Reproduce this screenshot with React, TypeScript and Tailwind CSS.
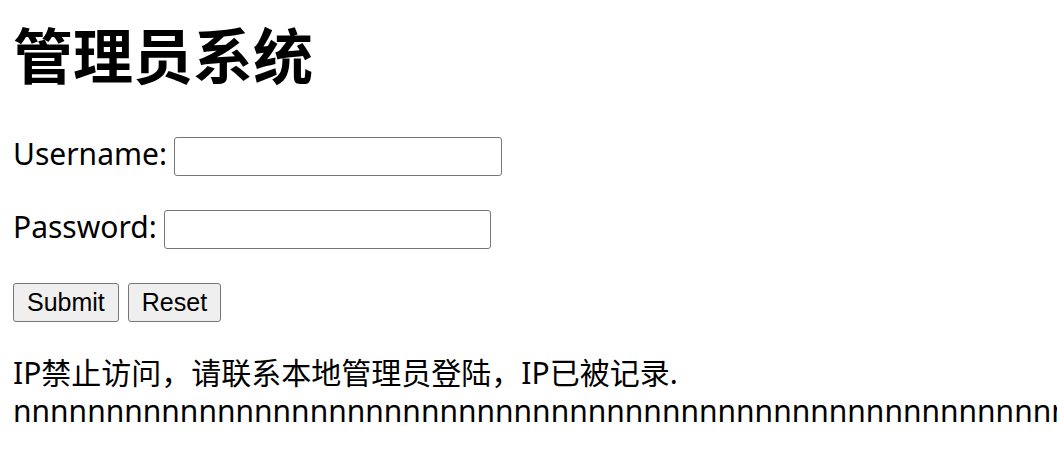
export default function App() {
  const ff = { fontFamily: '"Noto Sans", "Noto Sans CJK SC", sans-serif' };
  return (
    <div
      className="w-[1057px] h-[457px] overflow-hidden bg-white text-black pl-[13px] pt-[20px]"
      style={ff}
    >
      <h1 className="text-[60px] font-bold leading-[72px] m-0">管理员系统</h1>
      <form className="flex flex-col" onSubmit={(e) => e.preventDefault()}>
        <div className="flex items-center h-[39px] mt-[45px] text-[30px] leading-[39px]">
          <label className="mb-[6px]">Username:</label>
          <input
            type="text"
            className="ml-[7px] w-[328px] h-[39px] border border-[#767676] rounded-[3px] bg-white outline-none"
          />
        </div>
        <div className="flex items-center h-[39px] mt-[34px] text-[30px] leading-[39px]">
          <label className="mb-[6px]">Password:</label>
          <input
            type="password"
            className="ml-[7px] w-[327px] h-[39px] border border-[#767676] rounded-[3px] bg-white outline-none"
          />
        </div>
        <div className="flex items-center gap-[9px] mt-[34px]">
          <button
            type="submit"
            className="h-[39px] px-[13px] bg-[#efefef] border border-[#767676] rounded-[3px] text-[25px] leading-none text-black"
            style={{ fontFamily: '"Liberation Sans", Arial, sans-serif' }}
          >
            Submit
          </button>
          <button
            type="reset"
            className="h-[39px] px-[13px] bg-[#efefef] border border-[#767676] rounded-[3px] text-[25px] leading-none text-black"
            style={{ fontFamily: '"Liberation Sans", Arial, sans-serif' }}
          >
            Reset
          </button>
        </div>
      </form>
      <p className="mt-[32px] text-[30px] leading-[38px] whitespace-nowrap">
        IP禁止访问，请联系本地管理员登陆，IP已被记录.
        <br />
        nnnnnnnnnnnnnnnnnnnnnnnnnnnnnnnnnnnnnnnnnnnnnnnnnnnnnnnnnnnnnnnnnnnnnnnnnnnnnnnnnnnnn
      </p>
    </div>
  );
}
